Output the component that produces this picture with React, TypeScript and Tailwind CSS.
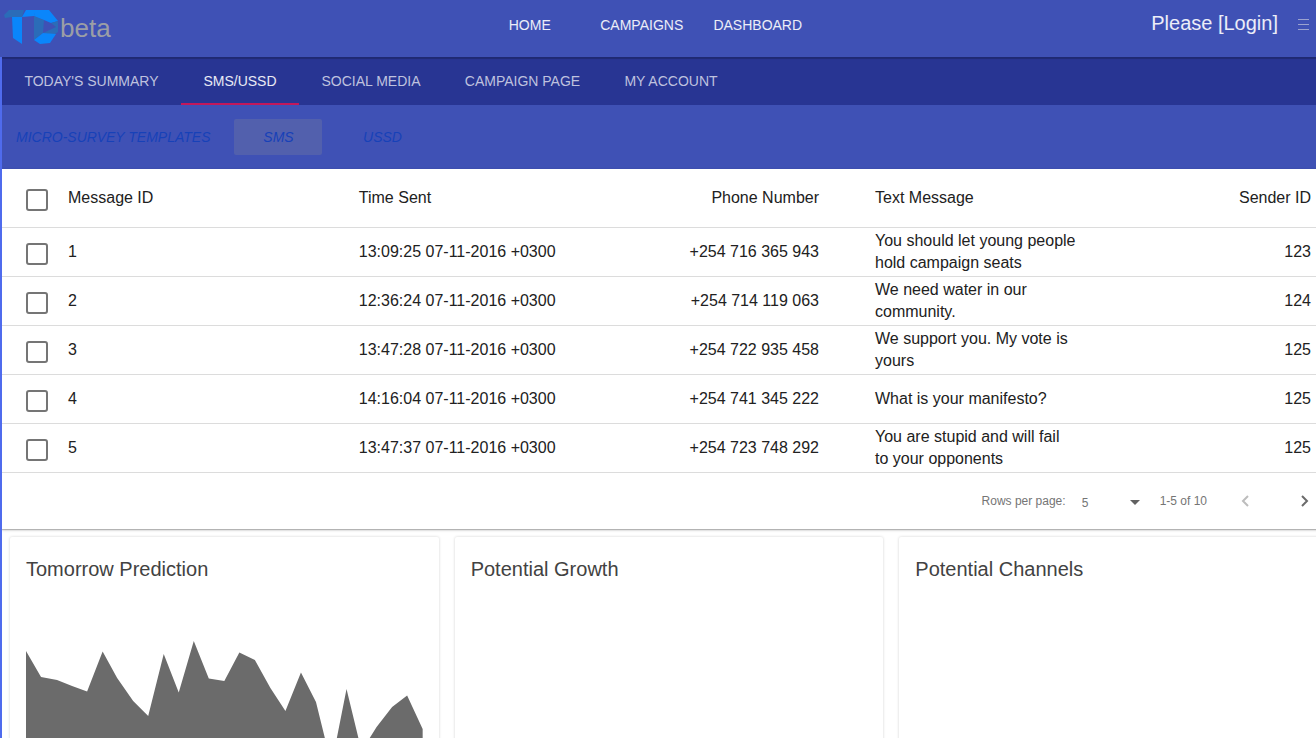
import React from "react";

type Message = {
  id: number;
  time: string;
  phone: string;
  text: string;
  sender: number;
};

const messages: Message[] = [
  { id: 1, time: "13:09:25 07-11-2016 +0300", phone: "+254 716 365 943", text: "You should let young people hold campaign seats", sender: 123 },
  { id: 2, time: "12:36:24 07-11-2016 +0300", phone: "+254 714 119 063", text: "We need water in our community.", sender: 124 },
  { id: 3, time: "13:47:28 07-11-2016 +0300", phone: "+254 722 935 458", text: "We support you. My vote is yours", sender: 125 },
  { id: 4, time: "14:16:04 07-11-2016 +0300", phone: "+254 741 345 222", text: "What is your manifesto?", sender: 125 },
  { id: 5, time: "13:47:37 07-11-2016 +0300", phone: "+254 723 748 292", text: "You are stupid and will fail to your opponents", sender: 125 },
];

const tabs = [
  { name: "TODAY'S SUMMARY", width: "w-[179px]" },
  { name: "SMS/USSD", width: "w-[118px]" },
  { name: "SOCIAL MEDIA", width: "w-[144px]" },
  { name: "CAMPAIGN PAGE", width: "w-[159px]" },
  { name: "MY ACCOUNT", width: "w-[138px]" },
];

function Logo() {
  return (
    <svg viewBox="0 0 56 36" className="h-9 w-14 shrink-0" aria-hidden="true">
      <path d="M0 5 L5 0 L20 0 L18 7 L8 7 L1 8 Z" fill="#2b6cb8" />
      <path d="M18 7 L22 0 L32 0 L30 6 Z" fill="#0a86fb" />
      <path d="M8 7 L18 7 L18 34 L9 28 Z" fill="#0a86fb" />
      <path d="M30 6 L40 10 L39 23 L30 30 Z" fill="#2b6cb8" />
      <path d="M31 0 L45 0 L54 11 L47 13 L40 10 L30 6 Z" fill="#0a86fb" />
      <path d="M47 13 L54 11 L54 22 L50 25 L39 23 L52 17 Z" fill="#2b6cb8" />
      <path d="M30 30 L39 23 L52 24 L46 33 L36 34 Z" fill="#0a86fb" />
    </svg>
  );
}

function Check({ label }: { label: string }) {
  return (
    <input
      type="checkbox"
      aria-label={label}
      className="mt-1 block size-[22px] appearance-none rounded-[3px] border-2 border-[#757575] bg-white checked:bg-[#3f51b5]"
    />
  );
}

function Card({ title, children }: { title: string; children?: React.ReactNode }) {
  return (
    <section className="min-h-[280px] rounded-xs bg-white p-4 shadow-[0_0_3px_rgba(0,0,0,0.18)]">
      <h2 className="text-[20px] leading-8 text-[#424242]">{title}</h2>
      {children}
    </section>
  );
}

export default function App() {
  return (
    <div className="flex h-screen flex-col overflow-hidden bg-white font-['Liberation_Sans',Arial,sans-serif] text-[#212121]">
      <header className="flex h-[57px] shrink-0 items-center bg-[#3f51b5] text-white">
        <div className="flex w-[36%] items-center pb-[2px] pl-1">
          <Logo />
          <span className="text-[26px] leading-8 text-[#9b9ea6]">beta</span>
        </div>
        <nav className="flex pb-2 text-[14px] leading-5 text-white/90">
          <a href="#home" className="w-28 text-center">HOME</a>
          <a href="#campaigns" className="w-28 text-center">CAMPAIGNS</a>
          <a href="#dashboard" className="w-[120px] text-center">DASHBOARD</a>
        </nav>
        <div className="ml-auto flex items-center pr-[7px] pb-2">
          <a href="#login" className="mr-5 pb-1 text-[20px] leading-6 text-white/90">Please [Login]</a>
          <button type="button" aria-label="Menu">
            <svg viewBox="0 0 11 11" className="block size-[11px]" stroke="#9ba2cf" strokeWidth="1">
              <path d="M0 0.5H11M0 5.5H11M0 10.5H11" />
            </svg>
          </button>
        </div>
      </header>

      <main className="min-h-0 flex-1 overflow-x-hidden overflow-y-auto border-l-2 border-[#4f6bed] [scrollbar-width:none]">
        <div className="w-[calc(100%+20px)]">
          <div role="tablist" className="flex h-12 bg-[#283593] text-[14px] shadow-[inset_0_2px_1px_rgba(0,0,0,0.22)]">
            {tabs.map(({ name, width }) => (
              <button
                key={name}
                type="button"
                role="tab"
                aria-selected={name === "SMS/USSD"}
                className={`${width} whitespace-nowrap ${
                  name === "SMS/USSD"
                    ? "border-b-2 border-[#c2185b] pt-[2px] text-white/90"
                    : "text-[#bfc2df]"
                }`}
              >
                {name}
              </button>
            ))}
          </div>

          <div className="flex h-16 items-center bg-[#3f51b5] pl-[14px] text-[14px] text-[#1741b8] italic">
            <a href="#templates" className="mr-6">MICRO-SURVEY TEMPLATES</a>
            <button type="button" className="h-9 w-[88px] rounded-xs bg-[#5260ad] italic">SMS</button>
            <button type="button" className="ml-4 h-9 w-[88px] italic">USSD</button>
          </div>

          <div className="bg-white shadow-[0_1px_3px_rgba(0,0,0,0.2),0_1px_1px_rgba(0,0,0,0.2)]">
            <table className="w-full table-fixed border-collapse text-left text-[16px] leading-[22px]">
              <colgroup>
                <col className="w-[66px]" />
                <col className="w-[21.8%]" />
                <col className="w-[17.2%]" />
                <col className="w-[17.3%]" />
                <col className="w-[23%]" />
                <col />
              </colgroup>
              <thead>
                <tr className="h-[58px] border-b border-[#dcdcdc]">
                  <th className="pl-6"><Check label="Select all messages" /></th>
                  <th className="font-normal">Message ID</th>
                  <th className="font-normal">Time Sent</th>
                  <th className="text-right font-normal">Phone Number</th>
                  <th className="pl-14 font-normal">Text Message</th>
                  <th className="pr-[25px] text-right font-normal">Sender ID</th>
                </tr>
              </thead>
              <tbody>
                {messages.map((m) => (
                  <tr key={m.id} className="h-[49px] border-b border-[#dcdcdc]">
                    <td className="pl-6"><Check label={`Select message ${m.id}`} /></td>
                    <td>{m.id}</td>
                    <td className="whitespace-nowrap">{m.time}</td>
                    <td className="text-right">{m.phone}</td>
                    <td className="pl-14"><div className="max-w-[202px]">{m.text}</div></td>
                    <td className="pr-[25px] text-right">{m.sender}</td>
                  </tr>
                ))}
              </tbody>
            </table>
            <div className="flex h-14 items-center justify-end pr-[7px] text-[12px] text-[#757575]">
              <label htmlFor="rows">Rows per page:</label>
              <div className="ml-4 grid w-[66px] items-center pt-1">
                <select id="rows" defaultValue="5" className="col-start-1 row-start-1 appearance-none bg-transparent">
                  <option>5</option>
                  <option>10</option>
                </select>
                <svg viewBox="0 0 10 5" className="pointer-events-none col-start-1 row-start-1 mr-2 h-[5px] w-[10px] justify-self-end" fill="#616161">
                  <path d="M0 0H10L5 5Z" />
                </svg>
              </div>
              <span className="ml-3">1-5 of 10</span>
              <button type="button" aria-label="Previous page" disabled className="ml-[14px] grid size-12 place-items-center text-[#bdbdbd]">
                <svg viewBox="0 0 8 12" className="h-3 w-2" fill="none" stroke="currentColor" strokeWidth="2"><path d="M7 1L2 6L7 11" /></svg>
              </button>
              <button type="button" aria-label="Next page" className="ml-3 grid size-12 place-items-center text-[#6b6b6b]">
                <svg viewBox="0 0 8 12" className="h-3 w-2" fill="none" stroke="currentColor" strokeWidth="2"><path d="M1 1L6 6L1 11" /></svg>
              </button>
            </div>
          </div>

          <div className="grid grid-cols-3 gap-4 p-2">
            <Card title="Tomorrow Prediction">
              <svg viewBox="0 0 396 150" preserveAspectRatio="none" className="mt-[45px] block h-[150px] w-full" fill="#6b6b6b" role="img" aria-label="Prediction area chart">
                <path d="M0 21L15 47L31 50L46 56L61 61.5L76.5 21.5L91 48L107 71L122 86L137.5 24L152.5 62.5L167.5 11L182.5 48.5L198 51L213 22.5L228.5 30L244 58L259 81L274.5 42.5L289.5 72L305 135L320 59L335 121L350 97L365.5 77L380.5 65.5L396 99V150H0Z" />
              </svg>
            </Card>
            <Card title="Potential Growth" />
            <Card title="Potential Channels" />
          </div>
        </div>
      </main>
    </div>
  );
}
